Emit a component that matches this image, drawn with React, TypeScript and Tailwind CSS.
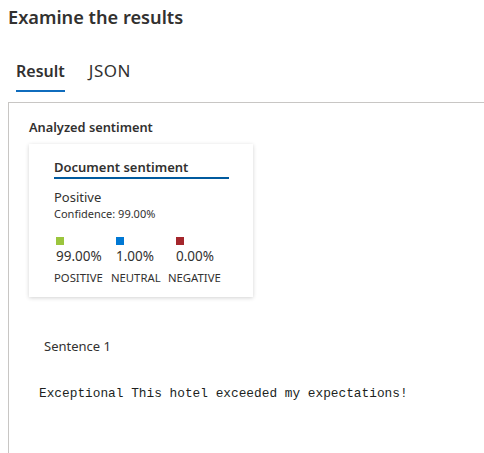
import React from 'react';

const scores = [
  { label: 'POSITIVE', value: '99.00%', color: 'bg-[#9bc53d]' },
  { label: 'NEUTRAL', value: '1.00%', color: 'bg-[#0078d4]' },
  { label: 'NEGATIVE', value: '0.00%', color: 'bg-[#a4262c]' },
];

export default function App() {
  return (
    <div
      className="w-[484px] h-[453px] bg-white overflow-hidden flex flex-col text-[#323130]"
      style={{ fontFamily: '"Noto Sans", "Open Sans", sans-serif' }}
    >
      {/* Header */}
      <h1 className="pl-2 pt-[4px] text-[18.2px] font-semibold leading-[26px]">Examine the results</h1>

      {/* Tabs */}
      <div className="flex ml-4 mt-[30px] gap-[24px] text-[16px] leading-[22px]">
        <div className="flex flex-col">
          <span className="font-semibold">Result</span>
          <div className="mt-[8px] h-[2px] bg-[#0f6cbd]"></div>
        </div>
        <span className="text-[17px] tracking-[0.5px]">JSON</span>
      </div>

      {/* Result panel */}
      <div className="ml-2 mt-[10px] flex-1 border-l border-t border-[#c8c6c4] pl-[20px] pt-[15px]">
        <div className="text-[12.8px] font-semibold leading-[18px]">Analyzed sentiment</div>

        {/* Document sentiment card */}
        <div className="mt-[8px] w-[224px] h-[153px] bg-white shadow-[0_1px_4px_rgba(0,0,0,0.18)] pl-[25px] pt-[14px]">
          <div className="w-[175px] border-b-2 border-[#005a9e] text-[13px] font-semibold leading-[18px] pb-[1px]">
            Document sentiment
          </div>
          <div className="mt-[9px] text-[13px] leading-[18px]">Positive</div>
          <div className="text-[11px] leading-[16px]">Confidence: 99.00%</div>

          <div className="mt-[15px] flex pl-[2px]">
            {scores.map((s) => (
              <div key={s.label} className="flex flex-col w-[60px]">
                <div className={`w-[8px] h-[8px] ${s.color}`}></div>
                <div className="mt-[3px] text-[13.5px] leading-[16px]">{s.value}</div>
              </div>
            ))}
          </div>
          <div className="mt-[7px] flex text-[11.3px] leading-[14px]">
            {scores.map((s) => (
              <div key={s.label} className="w-[57px]">{s.label}</div>
            ))}
          </div>
        </div>

        {/* Sentence */}
        <div className="mt-[40px] pl-[15px] text-[13px] leading-[18px]">Sentence 1</div>
        <div
          className="mt-[30px] pl-[10px] text-[12.8px] leading-[18px] text-[#201f1e]"
          style={{ fontFamily: '"Liberation Mono", monospace' }}
        >
          Exceptional This hotel exceeded my expectations!
        </div>
      </div>
    </div>
  );
}
